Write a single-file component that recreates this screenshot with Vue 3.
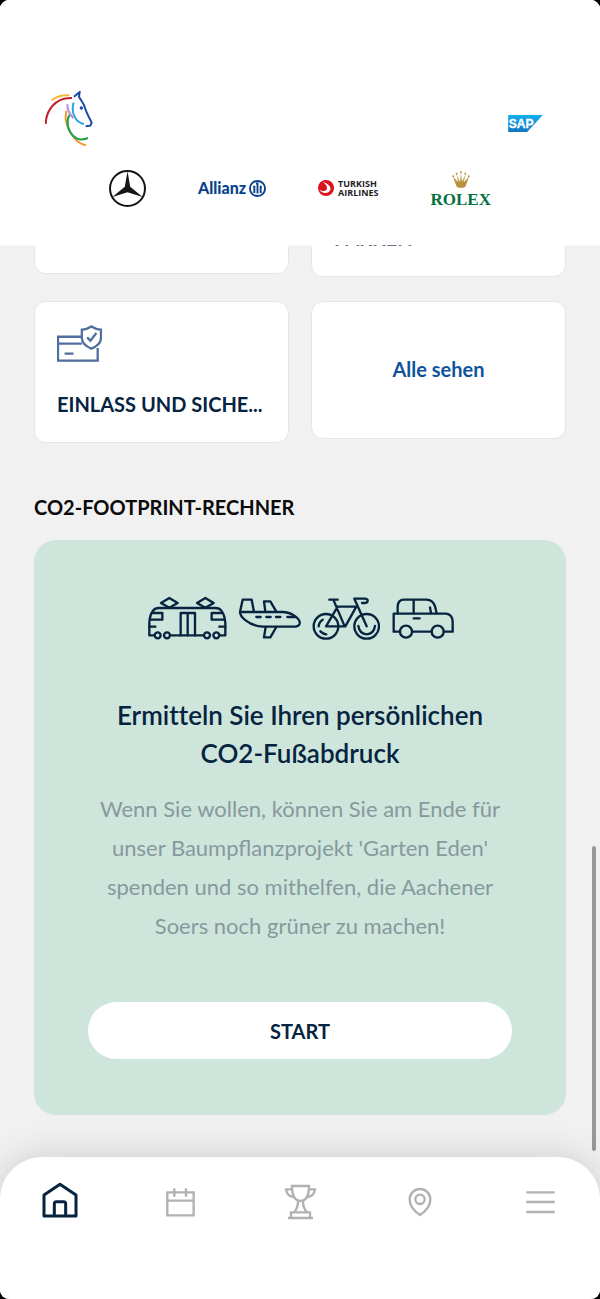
<template>
    <div class="screen">
        <header class="top">
            <div class="brand-row">
                <svg class="horse" viewBox="45 33 144 168" role="img" aria-label="Logo">
                    <path d="M65 61Q86 44 118 46" stroke="#f6b73c" />
                    <path d="M47 132C48 92 75 52 126 54" stroke="#c4202f" />
                    <path d="M112 73C112 90 118 103 130 114" stroke="#b58ad0" />
                    <path d="M109 92C104 112 108 134 120 155C130 175 148 192 168 196" stroke="#f39a2d" />
                    <path d="M118 105C108 125 112 150 130 168C142 180 160 180 174 174" stroke="#1fa04c" />
                    <path d="M131 68C122 95 135 128 162 132" stroke="#25a8e0" />
                    <path d="M132 50L149 36L147 50C155 65 163 72 165 84C170 100 179 115 185 128L181 137L167 139" stroke="#1b4aa5" />
                    <circle cx="154" cy="84" r="5" fill="#1b4aa5" />
                </svg>
                <svg class="sap" viewBox="54 44 106 52">
                    <defs>
                        <linearGradient id="sapFill" x1="0" y1="0" x2="0" y2="1">
                            <stop offset="0" stop-color="#12b0ec" />
                            <stop offset="1" stop-color="#1274c4" />
                        </linearGradient>
                    </defs>
                    <path d="M54 44H160L112 96H54z" fill="url(#sapFill)" />
                    <text x="56" y="84">SAP</text>
                </svg>
            </div>

            <div class="sponsors">
                <svg class="mercedes" viewBox="42 28 110 110" role="img" aria-label="Logo">
                    <circle cx="97" cy="83" r="52" />
                    <path d="M97 32L105 78L142 108L97 94L52 108L89 78z" />
                </svg>
                <div class="allianz">
                    <span>Allianz</span>
                    <svg viewBox="0 0 54 54">
                        <circle cx="27" cy="27" r="24" />
                        <path d="M17 41V21H13M27 43V11H22M37 41V21H41" />
                    </svg>
                </div>
                <div class="turkish">
                    <svg viewBox="0 0 48 48">
                        <circle cx="24" cy="24" r="24" fill="#d9131f" />
                        <path d="M13 5C25 13 30 20 25 30C20 35 12 33 4 29C14 43 32 41 37 30C40 19 30 10 13 5z" fill="#fff" />
                    </svg>
                    <div class="turkish-name">
                        <span>TURKISH</span>
                        <span>AIRLINES</span>
                    </div>
                </div>
                <div class="rolex">
                    <svg viewBox="0 0 54 54">
                        <path d="M14 47L3 17L19 34L13 9L24 33L27 5L30 33L41 9L35 34L51 17L40 47Q27 54 14 47z" />
                        <circle cx="4" cy="16" r="3" />
                        <circle cx="14" cy="8" r="3" />
                        <circle cx="27" cy="4" r="3" />
                        <circle cx="40" cy="8" r="3" />
                        <circle cx="50" cy="16" r="3" />
                    </svg>
                    <span>ROLEX</span>
                </div>
            </div>
        </header>

        <main class="content">
            <div class="tiles">
                <div class="tile"></div>
                <div class="tile tile-tall">
                    <span class="tile-label">PARKEN</span>
                </div>
                <button class="tile" type="button">
                    <svg class="tile-icon" viewBox="81 91 136 111">
                        <path d="M156 126H84V198H204V160M84 147H156M104 177H131" />
                        <path d="M185 95Q197 103 214 105V130Q213 151 185 162Q157 151 156 130V105Q173 103 185 95z" />
                        <path d="M172 128L182 138L200 115" />
                    </svg>
                    <span class="tile-label">EINLASS UND SICHE...</span>
                </button>
                <button class="tile tile-all" type="button">Alle sehen</button>
            </div>

            <h2 class="section-title">CO2-FOOTPRINT-RECHNER</h2>

            <section class="footprint">
                <div class="vehicles">
                    <svg class="tram" viewBox="30 31 240 132">
                        <path d="M52 149H37V112Q38 88 48 75Q54 67 66 67H235Q247 67 253 75Q263 88 265 112V149H248M100 149H199" />
                        <path d="M72 52L97 37L122 52L97 66zM180 52L205 37L230 52L205 66z" />
                        <path d="M47 82H76V102H39M254 82H224V102H262M37 123H55M265 123H247" />
                        <path d="M131 149V82H174V149M152 82V149" />
                        <circle cx="62" cy="149" r="9" />
                        <circle cx="90" cy="149" r="9" />
                        <circle cx="210" cy="149" r="9" />
                        <circle cx="238" cy="149" r="9" />
                    </svg>
                    <svg class="plane" viewBox="306 31 189 132">
                        <path d="M312 79L320 42H347L354 79M312 79H442Q462 80 478 92Q493 103 491 114Q489 123 470 123H380Q350 121 329 104Q312 91 312 79z" />
                        <path d="M388 78L384 47H403L421 78M389 124L384 155H403L421 124" />
                        <path d="M361 94H374M391 94H404M420 94H433M454 94H478" />
                    </svg>
                    <svg class="bike" viewBox="30 31 204 132">
                        <circle cx="72" cy="122" r="37" />
                        <circle cx="194" cy="122" r="37" />
                        <path d="M82 42H107M94 42L128 122H72L107 63H163L130 122M194 122L157 39H190Q198 40 197 46Q196 52 188 52H180" />
                        <path d="M50 122Q51 109 62 102M55 137Q63 145 73 146M169 121Q173 145 194 146Q215 145 219 121" />
                    </svg>
                    <svg class="car" viewBox="270 31 189 132">
                        <path d="M297 138H278V84H435Q454 86 455 108V138H429M334 138H391" />
                        <path d="M290 83V62Q291 42 309 42H376Q396 43 402 62L407 83M338 42V83M387 65L390 82M338 98H356" />
                        <circle cx="315" cy="138" r="18" />
                        <circle cx="410" cy="138" r="18" />
                    </svg>
                </div>
                <h3>Ermitteln Sie Ihren persönlichen<br />CO2-Fußabdruck</h3>
                <p>
                    Wenn Sie wollen, können Sie am Ende für unser Baumpflanzprojekt 'Garten Eden'
                    spenden und so mithelfen, die Aachener Soers noch grüner zu machen!
                </p>
                <button class="start" type="button">START</button>
            </section>

            <div class="scroll-thumb"></div>
        </main>

        <nav class="tabs">
            <button
                v-for="tab in tabs"
                :key="tab.name"
                type="button"
                :class="{ active: tab.name === activeTab }"
                :aria-label="tab.name"
                @click="activeTab = tab.name"
            >
                <svg :viewBox="tab.box">
                    <path :d="tab.path" />
                </svg>
            </button>
        </nav>
    </div>
</template>

<script setup>
import { ref } from 'vue'

const activeTab = ref('Home')

// icons of the bottom bar
const tabs = [
    {
        name: 'Home',
        box: '48 21 144 144',
        path: 'M72 138V75L120 43L168 75V138zM103 138V101Q103 95 109 95H131Q137 95 137 101V138'
    },
    {
        name: 'Kalender',
        box: '408 21 144 144',
        path: 'M442 67H521V136H442zM442 92H521M463 55V80M498 55V80'
    },
    {
        name: 'Ergebnisse',
        box: '18 21 144 144',
        path: 'M66 48H117C117 75 110 92 92 93C74 92 66 75 66 48zM66 58H48C50 72 56 80 72 81M117 58H135C133 72 127 80 111 81M84 94C84 108 80 118 73 126M99 94C99 108 103 118 110 126M63 141V127H120V141M54 144H129'
    },
    {
        name: 'Karte',
        box: '378 21 144 144',
        path: 'M450 57C432 57 419 71 419 89C419 110 440 128 450 135C460 128 481 110 481 89C481 71 468 57 450 57zM450 74A14 14 0 1 0 450 102A14 14 0 1 0 450 74z'
    },
    {
        name: 'Menü',
        box: '738 21 144 144',
        path: 'M769 67H854M769 96H854M769 126H854'
    }
]
</script>

<style>
body {
    margin: 0;
    background: #000;
}
</style>

<style scoped>
.screen {
    height: 100vh;
    display: flex;
    flex-direction: column;
    overflow: hidden;
    border-radius: 9px;
    background: #f1f1f1;
    color: #06233f;
    font-family: Lato, "Liberation Sans", sans-serif;
}

.screen * {
    box-sizing: border-box;
}

button {
    border: none;
    padding: 0;
    font-family: inherit;
    color: inherit;
    cursor: pointer;
}

svg {
    display: block;
    fill: none;
}

/* header */
.top {
    flex: none;
    padding: 91px 0 38px;
    background: #fff;
    box-shadow: 0 0 3px #fff;
    z-index: 1;
}

.brand-row {
    display: flex;
    justify-content: space-between;
    align-items: center;
    padding: 0 57px 0 45px;
    margin-bottom: 22px;
}

.horse {
    width: 48px;
    height: 56px;
    stroke-width: 6px;
}

.sap {
    width: 35px;
    height: 17px;
    margin-top: 8px;
}

.sap text {
    fill: #fff;
    stroke: #fff;
    stroke-width: 1px;
    font: bold 37px "Liberation Sans", sans-serif;
}

.sponsors {
    height: 38px;
    display: flex;
    justify-content: space-between;
    align-items: center;
    padding: 0 109px;
}

.mercedes {
    width: 37px;
    height: 37px;
    fill: #151515;
}

.mercedes circle {
    fill: none;
    stroke: #151515;
    stroke-width: 6px;
}

.allianz {
    display: flex;
    align-items: center;
    gap: 3px;
    color: #0a418c;
    font-size: 16px;
    font-weight: 900;
    line-height: 18px;
}

.allianz svg {
    width: 17px;
    height: 17px;
    stroke: #0a418c;
    stroke-width: 6px;
}

.turkish {
    display: flex;
    align-items: center;
    gap: 4px;
    color: #1d1d1f;
    font: bold 9px/9px "Open Sans", sans-serif;
}

.turkish svg {
    width: 16px;
    height: 16px;
}

.turkish-name {
    display: flex;
    flex-direction: column;
}

.rolex {
    display: flex;
    flex-direction: column;
    align-items: center;
    gap: 3px;
    padding-top: 3px;
    color: #04703f;
    font: bold 17px/16px "Liberation Serif", serif;
}

.rolex svg {
    width: 18px;
    height: 18px;
    fill: #b8923a;
}

/* scrolled page, seen from its lower end */
.content {
    position: relative;
    flex: 1;
    min-height: 0;
    display: flex;
    flex-direction: column;
    justify-content: flex-end;
    overflow: hidden;
    margin-bottom: -40px;
    padding: 0 34px 82px;
}

.content > * {
    flex: none;
}

.tiles {
    display: grid;
    grid-template-columns: 1fr 1fr;
    align-items: start;
    gap: 24px 22px;
}

.tile {
    min-width: 0;
    min-height: 142px;
    display: flex;
    flex-direction: column;
    justify-content: flex-end;
    align-items: flex-start;
    gap: 30px;
    padding: 23px 22px 26px;
    border: 1px solid #e6e6e6;
    border-radius: 12px;
    background: #fff;
    font-size: 20px;
    font-weight: 700;
    line-height: 24px;
}

.tile-tall {
    min-height: 145px;
}

.tile-all {
    min-height: 138px;
    justify-content: center;
    align-items: center;
    color: #0f539c;
}

.tile-icon {
    width: 45px;
    height: 37px;
    stroke: #506e9f;
    stroke-width: 7px;
}

.tile-label {
    white-space: nowrap;
}

.section-title {
    margin: 52px 0 21px;
    color: #0b0b0b;
    font-size: 20px;
    font-weight: 700;
    line-height: 24px;
}

.footprint {
    padding: 56px 54px;
    border-radius: 22px;
    background: #cee5dc;
    text-align: center;
}

.vehicles {
    display: flex;
    justify-content: center;
    gap: 11px;
    margin-bottom: 56px;
}

.vehicles svg {
    height: 44px;
    stroke: #06233f;
    stroke-width: 7px;
    stroke-linecap: round;
    stroke-linejoin: round;
}

.tram {
    width: 80px;
}

.plane,
.car {
    width: 63px;
}

.bike {
    width: 68px;
}

.footprint h3 {
    margin: 0 0 17px;
    font-size: 26px;
    font-weight: 600;
    line-height: 38px;
    font-variant-ligatures: none;
}

.footprint p {
    margin: 0 0 57px;
    color: #86999c;
    font-size: 22px;
    line-height: 39px;
}

.start {
    display: block;
    width: 100%;
    height: 57px;
    border-radius: 29px;
    background: #fff;
    font-size: 20px;
    font-weight: 700;
}

.scroll-thumb {
    position: absolute;
    right: 4px;
    bottom: 46px;
    width: 4px;
    height: 32%;
    border-radius: 2px;
    background: #989898;
}

/* bottom bar */
.tabs {
    flex: none;
    position: relative;
    display: grid;
    grid-template-columns: repeat(5, 1fr);
    justify-items: center;
    padding: 20px 0 74px;
    border-radius: 42px 42px 0 0;
    background: #fff;
    box-shadow: 0 0 36px rgba(0, 0, 0, 0.16);
}

.tabs button {
    background: none;
    color: #b1b1b1;
}

.tabs button.active {
    color: #06233f;
}

.tabs svg {
    width: 48px;
    height: 48px;
    stroke: currentColor;
    stroke-width: 7px;
}

.tabs .active svg {
    stroke-width: 9px;
    stroke-linejoin: round;
}
</style>
